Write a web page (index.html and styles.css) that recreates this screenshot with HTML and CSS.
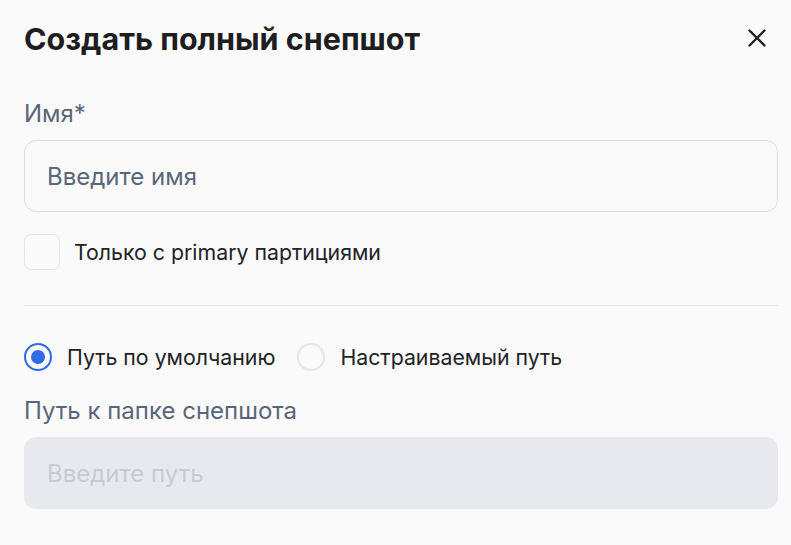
FILE: index.html
```html
<!DOCTYPE html>
<html lang="ru">
<head>
<meta charset="utf-8">
<title>Создать полный снепшот</title>
<link rel="stylesheet" href="styles.css">
</head>
<body>
<div class="dialog">
  <header class="head">
    <h1 class="title">Создать полный снепшот</h1>
    <button class="close" aria-label="Закрыть">
      <svg width="18" height="18" viewBox="0 0 18 18"><path d="M1.5 1.5L16.5 16.5M16.5 1.5L1.5 16.5" stroke="#1f1f24" stroke-width="2.4" stroke-linecap="round"/></svg>
    </button>
  </header>

  <label class="label">Имя*</label>
  <div class="input"><span class="ph">Введите имя</span></div>

  <div class="check-row">
    <span class="checkbox"></span>
    <span class="text">Только с primary партициями</span>
  </div>

  <div class="divider"></div>

  <div class="radios">
    <div class="radio-item">
      <span class="radio on"></span>
      <span class="text">Путь по умолчанию</span>
    </div>
    <div class="radio-item">
      <span class="radio"></span>
      <span class="text">Настраиваемый путь</span>
    </div>
  </div>

  <label class="label label2">Путь к папке снепшота</label>
  <div class="input disabled"><span class="ph">Введите путь</span></div>
</div>
</body>
</html>
```
FILE: styles.css
```css
* { box-sizing: border-box; }
html, body { margin: 0; padding: 0; }
body {
  background: #fafafa;
  font-family: Inter, "Noto Sans", sans-serif;
  width: 791px;
  height: 545px;
  overflow: hidden;
}
.dialog {
  padding: 0 13px 0 24px;
  display: flex;
  flex-direction: column;
}
.head {
  display: flex;
  align-items: center;
  justify-content: space-between;
  height: 76px;
  padding-right: 12px;
}
.title {
  margin: 0;
  font-size: 30.5px;
  font-weight: 700;
  color: #1d1d22;
  letter-spacing: 0;
}
.close {
  border: 0;
  background: none;
  padding: 0;
  width: 18px;
  height: 18px;
  display: flex;
}
.label {
  display: block;
  margin-top: 24px;
  font-size: 24px;
  line-height: 28px;
  color: #5b6579;
}
.input {
  margin-top: 12px;
  height: 72px;
  border: 1px solid #dcd9e8;
  border-radius: 12px;
  display: flex;
  align-items: center;
  padding-left: 22px;
  width: 754px;
}
.ph {
  font-size: 24px;
  color: #5b6579;
}
.check-row {
  display: flex;
  align-items: center;
  gap: 14px;
  margin-top: 22px;
}
.checkbox {
  width: 36px;
  height: 36px;
  border: 1px solid #e6e5ef;
  border-radius: 7px;
}
.text {
  font-size: 21.3px;
  color: #222227;
}
.divider {
  margin-top: 35px;
  height: 1px;
  background: #e7e6ee;
  width: 754px;
}
.radios {
  display: flex;
  gap: 22px;
  margin-top: 37px;
}
.radio-item {
  display: flex;
  align-items: center;
  gap: 15px;
}
.radio {
  width: 28px;
  height: 28px;
  border-radius: 50%;
  border: 2px solid #e6e6ee;
  position: relative;
}
.radio.on {
  border: 2.5px solid #2f6ae8;
}
.radio.on::after {
  content: "";
  position: absolute;
  left: 4.5px;
  top: 4.5px;
  width: 14px;
  height: 14px;
  border-radius: 50%;
  background: #2f6ae8;
}
.label2 { margin-top: 26px; }
.disabled {
  border: 0;
  background: #e8e9ee;
  padding-left: 23px;
}
.disabled .ph {
  color: #c8cad4;
}
```
